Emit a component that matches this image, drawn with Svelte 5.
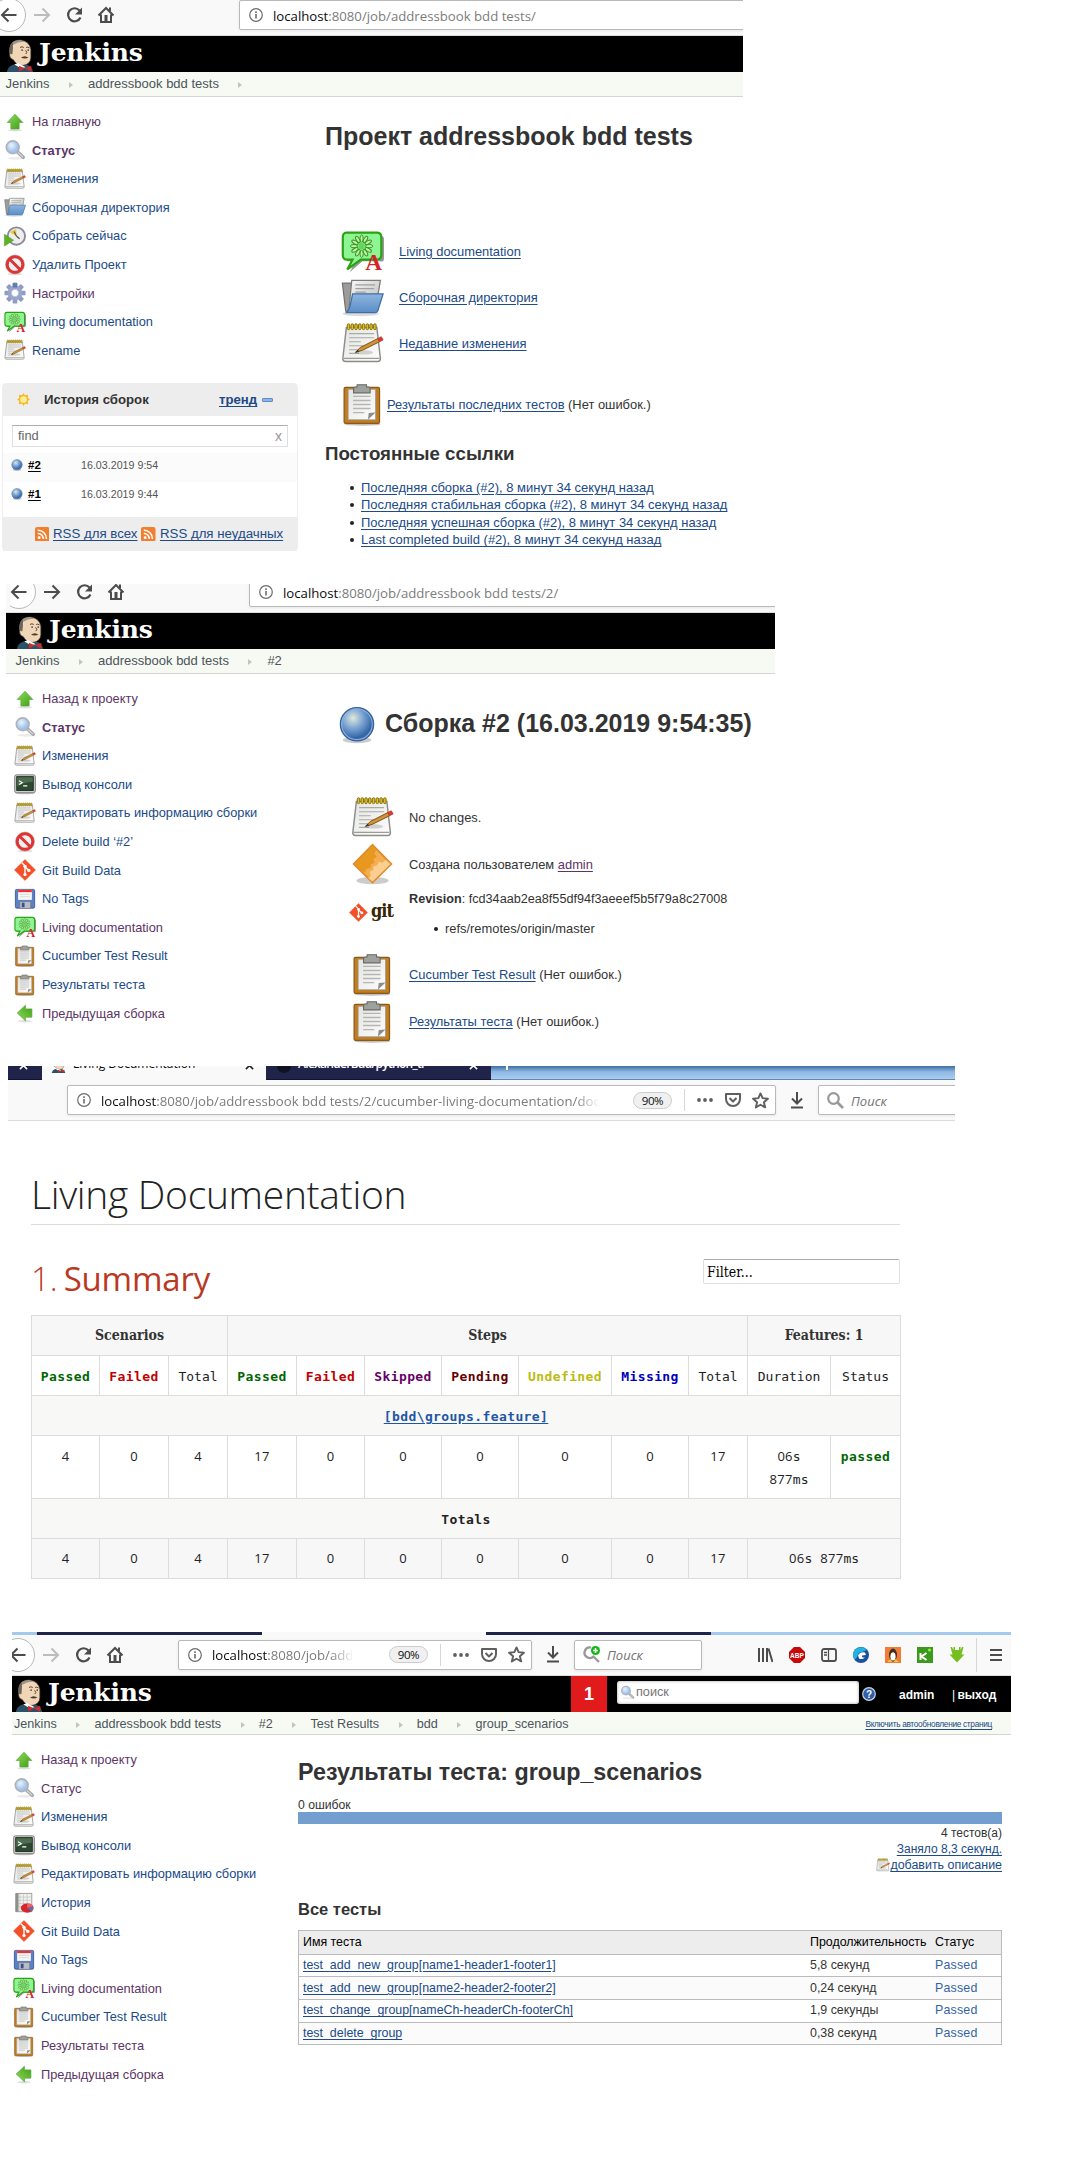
<script>
  const projectMenu = [
    ['up', 'На главную', 'visited'],
    ['search', 'Статус', 'visited current'],
    ['notepad', 'Изменения', ''],
    ['folder', 'Сборочная директория', ''],
    ['clock', 'Собрать сейчас', ''],
    ['stop', 'Удалить Проект', ''],
    ['gear', 'Настройки', 'visited'],
    ['living', 'Living documentation', ''],
    ['notepad', 'Rename', '']
  ];
  const buildMenu = [
    ['up', 'Назад к проекту', 'visited'],
    ['search', 'Статус', 'visited current'],
    ['notepad', 'Изменения', ''],
    ['terminal', 'Вывод консоли', ''],
    ['notepad', 'Редактировать информацию сборки', ''],
    ['stop', 'Delete build ‘#2’', ''],
    ['git', 'Git Build Data', ''],
    ['floppy', 'No Tags', ''],
    ['living', 'Living documentation', 'visited'],
    ['clipboard', 'Cucumber Test Result', ''],
    ['clipboard', 'Результаты теста', ''],
    ['left', 'Предыдущая сборка', 'visited']
  ];
  const resultMenu = [
    ['up', 'Назад к проекту', 'visited'],
    ['search', 'Статус', 'visited'],
    ['notepad', 'Изменения', ''],
    ['terminal', 'Вывод консоли', ''],
    ['notepad', 'Редактировать информацию сборки', ''],
    ['report', 'История', ''],
    ['git', 'Git Build Data', ''],
    ['floppy', 'No Tags', ''],
    ['living', 'Living documentation', 'visited'],
    ['clipboard', 'Cucumber Test Result', ''],
    ['clipboard', 'Результаты теста', 'visited'],
    ['left', 'Предыдущая сборка', 'visited']
  ];
  const permalinks = [
    'Последняя сборка (#2), 8 минут 34 секунд назад',
    'Последняя стабильная сборка (#2), 8 минут 34 секунд назад',
    'Последняя успешная сборка (#2), 8 минут 34 секунд назад',
    'Last completed build (#2), 8 минут 34 секунд назад'
  ];
  const builds = [
    ['#2', '16.03.2019 9:54'],
    ['#1', '16.03.2019 9:44']
  ];
  const tests = [
    ['test_add_new_group[name1-header1-footer1]', '5,8 секунд'],
    ['test_add_new_group[name2-header2-footer2]', '0,24 секунд'],
    ['test_change_group[nameCh-headerCh-footerCh]', '1,9 секунды'],
    ['test_delete_group', '0,38 секунд']
  ];
  const counts = [4, 0, 4, 17, 0, 0, 0, 0, 0, 17];
  const teeth = [0, 45, 90, 135, 180, 225, 270, 315];
  const petals = [0, 30, 60, 90, 120, 150, 180, 210, 240, 270, 300, 330];
  const rings = [7, 11.2, 15.4, 19.6, 23.8, 28, 32.2, 36.4];
</script>

{#snippet icon(name, cls)}
  <svg class="{cls} glyph" viewBox="0 0 48 48">
    {#if name === 'up' || name === 'left'}
      <g transform={name === 'left' ? 'rotate(-90 24 24)' : ''}>
        <path d="M24 7 L41 25 H33 V39 H15 V25 H7 Z" fill="url(#gGreen)" stroke="#55a83a" stroke-width="1.5" />
      </g>
      <ellipse cx="24" cy="42" rx="15" ry="2.5" fill="#000" opacity=".13" />
    {:else if name === 'search'}
      <ellipse cx="26" cy="42" rx="18" ry="3" fill="#000" opacity=".08" />
      <path d="M28 27 L42 40" stroke="#a2a4a8" stroke-width="7.5" stroke-linecap="round" />
      <path d="M31 30 L41 39" stroke="#d9dadd" stroke-width="2.5" stroke-linecap="round" />
      <circle cx="19" cy="18" r="14" fill="url(#gLens)" stroke="#adb2b9" stroke-width="3.5" />
    {:else if name === 'notepad'}
      <path d="M6 6 H40 L44 41 Q44 44 41 44 H5 Q2 44 2 41 Z" fill="url(#gPaper)" stroke="#8b8d88" stroke-width="1.6" />
      <path d="M3 40.5 H43" stroke="#9a9c97" stroke-width="1.4" />
      {#each rings as x}
        <rect x={x} y="2" width="2.8" height="6.5" rx="1.3" fill="#e0bf24" stroke="#86700c" stroke-width="1.1" />
      {/each}
      <path d="M9 13 H37 M9 17.5 H37 M9 22 H22 M9 26.5 H30 M9 31 H24 M9 35 H20" stroke="#a9aba6" stroke-width="1.2" />
      <ellipse cx="26" cy="34" rx="10" ry="2.4" fill="#000" opacity=".15" />
      <path d="M16 34 L21.500 28.500 L41 18.500 L43 22 L24 31.500 Z" fill="#d1933a" stroke="#7d5310" stroke-width="1.1" />
      <path d="M41 18.500 L45 16.500 L47 20 L43 22 Z" fill="#e8352b" stroke="#b5413b" />
      <path d="M16 34 L18.500 31 L20.500 33 Z" fill="#333" />
    {:else if name === 'folder'}
      <ellipse cx="22" cy="42" rx="20" ry="3" fill="#000" opacity=".14" />
      <path d="M1.500 8 H14 L12 40 H7 Q5 40 5 37 Z" fill="#9c9d9b" stroke="#6f706e" stroke-width="1.3" />
      <path d="M12 5 H44 L39 34 L9 36 Z" fill="url(#gGray)" stroke="#7c7d7a" stroke-width="1.4" />
      <path d="M16 10 H38 M16 14 H37 M16 18 H28" stroke="#a0a19e" stroke-width="1.4" />
      <path d="M13 20 H47 L41 39 Q40 41 38 41 H6 Q9 38 10 34 Z" fill="url(#gBlue)" stroke="#3c6ea8" stroke-width="1.4" />
    {:else if name === 'clock'}
      <circle cx="27" cy="24" r="19" fill="#ededeb" stroke="#8888a0" stroke-width="4" />
      <path d="M27 24 V9 A15 15 0 0 0 14 17 Z" fill="#ecc845" />
      <path d="M27 24 L34 30 M27 24 L22 14" stroke="#555" stroke-width="2.6" />
      <path d="M1 20 L21 33 L1 46 Z" fill="#5fb320" stroke="#46901a" />
    {:else if name === 'stop'}
      <ellipse cx="24" cy="44" rx="16" ry="2.5" fill="#000" opacity=".12" />
      <circle cx="24" cy="23" r="17" fill="#f1efef" stroke="#dc3535" stroke-width="6.5" />
      <path d="M12 11 L36 35" stroke="#dc3535" stroke-width="6.5" />
      <circle cx="24" cy="23" r="20.5" fill="none" stroke="#b92424" />
    {:else if name === 'gear'}
      {#each teeth as a}
        <rect x="19" y="1" width="10" height="14" rx="2" fill="#8e9bc4" transform="rotate({a} 24 24)" />
      {/each}
      <circle cx="24" cy="24" r="12" fill="#fff" stroke="#9aa5cb" stroke-width="8" />
      <circle cx="24" cy="24" r="8" fill="#fff" stroke="#7583b0" />
      <path d="M19 3 H29 V12 H19 Z" fill="#5d7cae" />
    {:else if name === 'living'}
      <path d="M8 6 H43 Q48 6 48 10 V32 Q48 36 43 35 H24 L10 47 L16 35 H7 Z" fill="#000" opacity=".4" />
      <path d="M6 3 H40 Q45 3 45 8 V28 Q45 33 40 33 H22 L7 44 L13 33 H6 Q2 33 2 28 V8 Q2 3 6 3 Z" fill="#8df592" stroke="#2ba114" stroke-width="2.4" />
      {#each petals as a}
        <ellipse cx="23" cy="9.5" rx="1.8" ry="4" fill="#b9f6a0" stroke="#3c9127" stroke-width="1.1" transform="rotate({a} 23 18)" />
      {/each}
      <circle cx="23" cy="18" r="3.5" fill="#62d75e" />
      <text x="27" y="45" class="red-a">A</text>
    {:else if name === 'terminal'}
      <ellipse cx="24" cy="44" rx="21" ry="2.5" fill="#000" opacity=".25" />
      <rect x="1.5" y="4" width="45" height="39" rx="4" fill="#cfd0cc" stroke="#777975" stroke-width="2" />
      <rect x="6" y="8" width="36" height="30" fill="#2d4a31" stroke="#1c271d" stroke-width="2" />
      <path d="M7 9 H41 V19 Q22 20 7 29 Z" fill="#6c8a6c" opacity=".55" />
      <path d="M11 17 L18 21 L11 25 M20 28 H29" stroke="#fff" stroke-width="2.4" fill="none" />
    {:else if name === 'git'}
      <path d="M24 1 L47 24 L24 47 L1 24 Z" fill="#f34f29" stroke="#f34f29" stroke-linejoin="round" />
      <path d="M17 8 L24 15 V35 M24 17 L32 25" stroke="#fff" stroke-width="3" fill="none" />
      <circle cx="24" cy="16" r="3.6" fill="#fff" /><circle cx="24" cy="34" r="3.6" fill="#fff" /><circle cx="32.5" cy="25" r="3.6" fill="#fff" />
    {:else if name === 'floppy'}
      <rect x="3" y="3" width="42" height="41" rx="3" fill="#5b80c4" stroke="#35528c" stroke-width="1.8" />
      <rect x="9" y="4" width="30" height="22" fill="#f6f6f6" />
      <rect x="9" y="4" width="30" height="5" fill="#ee3030" />
      <path d="M13 14 H35 M13 19 H35" stroke="#ccc" stroke-width="1.4" />
      <rect x="13" y="30" width="23" height="14" fill="#b9bcc2" stroke="#777" />
      <rect x="17" y="32" width="6" height="10" fill="#35528c" />
    {:else if name === 'clipboard'}
      <ellipse cx="24" cy="46" rx="20" ry="1.8" fill="#000" opacity=".25" />
      <rect x="3.5" y="5" width="39.5" height="40" rx="1.5" fill="#c17d22" stroke="#8d5a14" stroke-width="1.4" />
      <path d="M8 7 H38.5 V41 H8 Z" fill="url(#gPaper)" stroke="#999" stroke-width=".8" />
      <path d="M30 41 L38.5 33 L31 33.5 Z" fill="#8b8d88" />
      <path d="M13.500 15 H33 M13.500 19.500 H33 M13.500 24 H33 M13.500 28.500 H33 M13.500 33 H26" stroke="#b5b6b3" stroke-width="1.5" />
      <path d="M14 6 Q14 4.500 16 4.500 H18 V2 H28.500 V4.500 H30.500 Q32.500 4.500 32.500 6 V11 H14 Z" fill="#9fa19c" stroke="#666864" stroke-width="1.2" />
    {:else if name === 'report'}
      <rect x="7" y="3" width="34" height="40" fill="#f2f2f1" stroke="#9a9b98" stroke-width="2" />
      <path d="M7 11 H41 M7 18 H41 M7 25 H41 M7 32 H41 M15 3 V43 M23 3 V43 M31 3 V43" stroke="#bbbdb9" stroke-width="1.4" />
      <path d="M5 3 H12 V43 H5 Z" fill="#8d8f8b" />
      <ellipse cx="31" cy="35" rx="14" ry="10" fill="#d4262c" />
      <path d="M31 35 L44 32 Q45 38 40 42 Z" fill="#4a76c0" />
      <path d="M31 35 L31 25 Q41 25 44 31 Z" fill="#ee6168" />
    {:else if name === 'ball'}
      <ellipse cx="24" cy="43" rx="18" ry="4" fill="#000" opacity=".2" />
      <circle cx="24" cy="23" r="21" fill="url(#gBall)" stroke="#33619e" stroke-width="1.6" />
      <circle cx="24" cy="23" r="19.300" fill="none" stroke="#8fb2de" stroke-width="1.300" />
    {:else if name === 'user'}
      <ellipse cx="24" cy="42" rx="18" ry="4" fill="#000" opacity=".2" />
      <path d="M24 2 L45 23.500 L24 44 L3 23.500 Z" fill="#f3ae52" stroke="#e08b28" stroke-width="2" />
      <path d="M24 3 L28 8 L26 12 L29 15 L25 18 L26 22 L22 24 L22 28 L17 29 L16 33 L11 31 L4 23.500 Z" fill="#e8971f" />
      <path d="M24 43 L44 23.500 L39 19 L35 22 L31 21 L29 25 L25 26 L25 30 L21 32 L22 37 L19 39 Z" fill="#fbcf91" />
    {/if}
  </svg>
{/snippet}

{#snippet nav(forward)}
  <svg class="nav" viewBox="0 0 124 36" width="124" height="36">
    <circle cx="9" cy="18" r="16.500" fill="#fff" stroke="#b8b8b8" />
    <path d="M2 18 H16.500 M8.500 11.500 L2 18 L8.500 24.500" fill="none" stroke="#4c4c4c" stroke-width="2" />
    <path d="M34 18 H49 M42.500 11.500 L49 18 L42.500 24.500" fill="none" stroke={forward ? '#4c4c4c' : '#bcbcbc'} stroke-width="2" />
    <path d="M79.500 13.500 A6.500 6.500 0 1 0 80.500 20.500" fill="none" stroke="#4c4c4c" stroke-width="2.200" />
    <path d="M82 10.500 V17.500 H75 Z" fill="#4c4c4c" />
    <path d="M98.500 18.500 L106 11 L113.500 18.500 M101 17.500 V25 H111 V17.500" fill="none" stroke="#4c4c4c" stroke-width="2" />
    <rect x="104.500" y="18" width="3" height="6" fill="#4c4c4c" />
    <path d="M110 10.500 V14" stroke="#4c4c4c" stroke-width="2" />
  </svg>
{/snippet}

{#snippet info()}
  <svg class="info" viewBox="0 0 14 14"><circle cx="7" cy="7" r="6.300" fill="none" stroke="#6d6d6d" stroke-width="1.200" /><path d="M7 6 V10.500 M7 3.300 V4.900" stroke="#6d6d6d" stroke-width="1.600" /></svg>
{/snippet}

{#snippet pageActions()}
  <span class="zoom">90%</span>
  <i class="sep"></i>
  <svg class="dots" viewBox="0 0 16 4"><circle cx="2" cy="2" r="1.900" /><circle cx="8" cy="2" r="1.900" /><circle cx="14" cy="2" r="1.900" /></svg>
  <svg class="pocket" viewBox="0 0 16 16"><path d="M1 2 H15 V7 A7 7 0 0 1 1 7 Z M4.500 6 L8 9.500 L11.500 6" fill="none" stroke="#5f5f5f" stroke-width="2" stroke-linejoin="round" /></svg>
  <svg class="star" viewBox="0 0 16 16"><path d="M8 1.300 L10 5.800 L15 6.300 L11.200 9.600 L12.400 14.500 L8 12 L3.600 14.500 L4.800 9.600 L1 6.300 L6 5.800 Z" fill="none" stroke="#5f5f5f" stroke-width="1.800" stroke-linejoin="round" /></svg>
{/snippet}

{#snippet download()}
  <svg class="download" viewBox="0 0 14 17"><path d="M7 0 V11 M2 6.500 L7 11.500 L12 6.500 M1 15.500 H13" fill="none" stroke="#4c4c4c" stroke-width="2" /></svg>
{/snippet}

{#snippet butler()}
  <path d="M0 35 Q1 29 7 27 L21 27 Q27 29 28 35 Z" fill="#2c5068" />
  <path d="M3 11 Q4 1 14 1 Q24 2 25.500 11 L25.500 20 Q25 27 17 28 Q10 28 7 22 Q3 21 3 17 Z" fill="#f0d6b7" stroke="#4a3a2a" stroke-width=".7" />
  <path d="M2.500 14 Q2 5 8 2.500 Q6 6 6.500 10 L6 16 Q4 17 2.500 14 Z" fill="#6d665d" />
  <path d="M6 3.500 Q13 -.5 20 3 Q13 2 7 6 Z" fill="#9c948a" />
  <path d="M14 9 Q16 7.500 18 9 M20.500 9 Q22 8 24 9.500 M20 12 Q22.500 15 20 16" stroke="#3b2c1e" stroke-width=".9" fill="none" />
  <path d="M15.500 11.800 h1.500 M22 11.800 h1.500" stroke="#222" stroke-width="1.300" />
  <path d="M15 20 Q19 16.500 23 20 Q19 21.500 15 20" fill="#4d3c2b" />
  <path d="M8 27 L12 25.500 L20 30 L15 31 Z" fill="#fff" />
  <path d="M13 28.500 L19 31 L13 34.800 Z M26 28.500 L19 31 L26 34.800 Z" fill="#d62a2a" />
{/snippet}

{#snippet brand()}
  <svg class="butler" viewBox="0 0 28 35">{@render butler()}</svg>
  <span class="wordmark">Jenkins</span>
{/snippet}

{#snippet crumbs(items, trailing)}
  {#each items as item, i}
    <span>{item}</span>{#if i < items.length - 1 || trailing}<i class="caret"></i>{/if}
  {/each}
{/snippet}

{#snippet menu(items)}
  <ul class="menu">
    {#each items as [glyph, label, cls]}
      <li class={cls}>{@render icon(glyph, 'small')}<span>{label}</span></li>
    {/each}
  </ul>
{/snippet}

{#snippet rss()}
  <svg class="rss" viewBox="0 0 14 14"><rect width="14" height="14" rx="2" fill="#f08030" /><circle cx="4" cy="10.300" r="1.400" fill="#fff" /><path d="M2.700 6.200 A5 5 0 0 1 7.900 11.500 M2.700 3.200 A8 8 0 0 1 11 11.500" fill="none" stroke="#fff" stroke-width="1.500" /></svg>
{/snippet}

<svg class="defs" width="0" height="0">
  <defs>
    <linearGradient id="gGreen" x1="0" y1="0" x2="1" y2="1"><stop offset="0" stop-color="#8fdc5c" /><stop offset="1" stop-color="#3f9d12" /></linearGradient>
    <radialGradient id="gLens" cx=".4" cy=".35"><stop offset="0" stop-color="#e9f3fd" /><stop offset="1" stop-color="#9fc3ea" /></radialGradient>
    <linearGradient id="gPaper" x1="0" y1="0" x2="1" y2="1"><stop offset="0" stop-color="#e4e4e2" /><stop offset="1" stop-color="#fdfdfd" /></linearGradient>
    <linearGradient id="gGray" x1="0" y1="0" x2="1" y2="1"><stop offset="0" stop-color="#fafafa" /><stop offset="1" stop-color="#b7b8b6" /></linearGradient>
    <linearGradient id="gBlue" x1="0" y1="0" x2="0" y2="1"><stop offset="0" stop-color="#8fb5df" /><stop offset="1" stop-color="#5a8dc6" /></linearGradient>
    <radialGradient id="gBall" cx=".38" cy=".32" r=".75"><stop offset="0" stop-color="#dfe9dc" /><stop offset=".4" stop-color="#7ea6d4" /><stop offset=".8" stop-color="#3365a4" /><stop offset="1" stop-color="#4a7ab8" /></radialGradient>
  </defs>
</svg>

<section class="shot project">
  <div class="toolbar">
    {@render nav(false)}
    <div class="url open">{@render info()}<span class="addr"><b>localhost</b>:8080/job/addressbook bdd tests/</span></div>
  </div>
  <header>{@render brand()}</header>
  <nav class="crumbs">{@render crumbs(['Jenkins', 'addressbook bdd tests'], true)}</nav>
  <div class="body">
    <aside>
      {@render menu(projectMenu)}
      <div class="history">
        <div class="history-head">
          <svg class="sun" viewBox="0 0 14 14"><path d="M7 0 L8.500 2.500 L12 2 L11.500 5.500 L14 7 L11.500 8.500 L12 12 L8.500 11.500 L7 14 L5.500 11.500 L2 12 L2.500 8.500 L0 7 L2.500 5.500 L2 2 L5.500 2.500 Z" fill="#fbb52c" /><circle cx="7" cy="7" r="3.600" fill="#fdf08d" /></svg>
          <strong>История сборок</strong>
          <a class="trend">тренд</a><i class="minus"></i>
        </div>
        <div class="find"><span>find</span><em>x</em></div>
        {#each builds as [num, date]}
          <div class="build">{@render icon('ball', 'tiny')}<a>{num}</a><time>{date}</time></div>
        {/each}
        <div class="history-foot">{@render rss()}<a>RSS для всех</a>{@render rss()}<a>RSS для неудачных</a></div>
      </div>
    </aside>
    <main>
      <h1>Проект addressbook bdd tests</h1>
      <div class="rows">
        <div class="row">{@render icon('living', 'large')}<a>Living documentation</a></div>
        <div class="row">{@render icon('folder', 'large')}<a>Сборочная директория</a></div>
        <div class="row">{@render icon('notepad', 'large')}<a>Недавние изменения</a></div>
      </div>
      <div class="row latest">{@render icon('clipboard', 'large')}<p><a>Результаты последних тестов</a> (Нет ошибок.)</p></div>
      <h2>Постоянные ссылки</h2>
      <ul class="links">
        {#each permalinks as link}<li><a>{link}</a></li>{/each}
      </ul>
    </main>
  </div>
</section>

<section class="shot build-page">
  <div class="toolbar">
    {@render nav(true)}
    <div class="url open">{@render info()}<span class="addr"><b>localhost</b>:8080/job/addressbook bdd tests/2/</span></div>
  </div>
  <header>{@render brand()}</header>
  <nav class="crumbs">{@render crumbs(['Jenkins', 'addressbook bdd tests', '#2'], false)}</nav>
  <div class="body">
    <aside>{@render menu(buildMenu)}</aside>
    <main>
      <div class="title">{@render icon('ball', 'status')}<h1>Сборка #2 (16.03.2019 9:54:35)</h1></div>
      <div class="row">{@render icon('notepad', 'large')}<p>No changes.</p></div>
      <div class="row">{@render icon('user', 'large')}<p>Создана пользователем <a class="seen">admin</a></p></div>
      <div class="row revision">
        <div class="git-logo">{@render icon('git', 'git-mark')}<span>git</span></div>
        <div>
          <p><b>Revision</b>: fcd34aab2ea8f55df94f3aeeef5b5f79a8c27008</p>
          <ul><li>refs/remotes/origin/master</li></ul>
        </div>
      </div>
      <div class="row">{@render icon('clipboard', 'large')}<p><a>Cucumber Test Result</a> (Нет ошибок.)</p></div>
      <div class="row">{@render icon('clipboard', 'large')}<p><a>Результаты теста</a> (Нет ошибок.)</p></div>
    </main>
  </div>
</section>

<section class="shot docs">
  <div class="tabs">
    <div class="tab dark first"><svg class="close" viewBox="0 0 10 10"><path d="M1 1 L9 9 M9 1 L1 9" stroke="#fff" stroke-width="1.800" /></svg></div>
    <div class="tab active"><svg class="favicon" viewBox="0 0 28 35">{@render butler()}</svg><span>Living Documentation</span><svg class="close" viewBox="0 0 10 10"><path d="M1 1 L9 9 M9 1 L1 9" stroke="#222" stroke-width="1.800" /></svg></div>
    <div class="tab dark repo"><i class="octo"></i><span>AlexanderBud/python_tr</span><svg class="close" viewBox="0 0 10 10"><path d="M1 1 L9 9 M9 1 L1 9" stroke="#fff" stroke-width="1.800" /></svg></div>
    <div class="glass"><i></i></div>
  </div>
  <div class="toolbar">
    <div class="url">
      {@render info()}<span class="addr fade"><b>localhost</b>:8080/job/addressbook bdd tests/2/cucumber-living-documentation/doc</span>
      {@render pageActions()}
    </div>
    {@render download()}
    <div class="search open"><svg class="mag" viewBox="0 0 17 17"><circle cx="6.500" cy="6.500" r="5.300" fill="none" stroke="#999" stroke-width="2.200" /><path d="M10.500 10.500 L16 16" stroke="#999" stroke-width="2.600" /></svg><em>Поиск</em></div>
  </div>
  <article>
    <h1>Living Documentation</h1>
    <div class="summary-head"><h2><span>1.</span> Summary</h2><div class="filter">Filter...</div></div>
    <table>
      <colgroup><col class="c68" /><col class="c69" /><col class="c59" /><col class="c69" /><col class="c68" /><col class="c77" /><col class="c77" /><col class="c93" /><col class="c77" /><col class="c59" /><col class="c83" /><col class="c70" /></colgroup>
      <tbody>
        <tr class="head"><th colspan="3">Scenarios</th><th colspan="7">Steps</th><th colspan="2">Features: 1</th></tr>
        <tr>
          <td class="b passed">Passed</td><td class="b failed">Failed</td><td>Total</td>
          <td class="b passed">Passed</td><td class="b failed">Failed</td><td class="b skipped">Skipped</td><td class="b pending">Pending</td><td class="b undef">Undefined</td><td class="b missing">Missing</td><td>Total</td>
          <td>Duration</td><td>Status</td>
        </tr>
        <tr class="shade"><td colspan="12" class="b"><a>[bdd\groups.feature]</a></td></tr>
        <tr class="tall">{#each counts as n}<td class="num">{n}</td>{/each}<td><span class="num">06</span>s<br /><span class="num">877</span>ms</td><td class="b passed">passed</td></tr>
        <tr class="shade"><td colspan="12" class="b">Totals</td></tr>
        <tr class="foot">{#each counts as n}<td class="num">{n}</td>{/each}<td colspan="2"><span class="num">06</span>s <span class="num">877</span>ms</td></tr>
      </tbody>
    </table>
  </article>
</section>

<section class="shot results">
  <div class="strip"><i class="sky"></i><i class="navy"></i><i class="pale"></i><i class="navy"></i><i class="sky rest"></i></div>
  <div class="toolbar">
    {@render nav(false)}
    <div class="url">
      {@render info()}<span class="addr fade"><b>localhost</b>:8080/job/add</span>
      {@render pageActions()}
    </div>
    {@render download()}
    <div class="search"><svg class="mag" viewBox="0 0 17 17"><path d="M8 1.500 A5.300 5.300 0 1 0 11 10 M10 10 L16 16" fill="none" stroke="#999" stroke-width="2.300" /><circle cx="12.500" cy="4.500" r="4.500" fill="#12b812" /><path d="M12.500 2 V7 M10 4.500 H15" stroke="#fff" stroke-width="1.500" /></svg><em>Поиск</em></div>
    <div class="addons">
      <svg viewBox="0 0 16 16"><path d="M2 1 V15 M6 1 V15 M10 1 V15 M11.500 1.500 L15.500 15" stroke="#4c4c4c" stroke-width="2" /></svg>
      <svg viewBox="0 0 16 16"><path d="M5 0 H11 L16 5 V11 L11 16 H5 L0 11 V5 Z" fill="#c8070a" /><text x="1" y="10.800" class="abp">ABP</text></svg>
      <svg viewBox="0 0 16 16"><rect x="1" y="2" width="14" height="12" rx="2" fill="none" stroke="#4c4c4c" stroke-width="1.800" /><path d="M7.500 2 V14 M3 5.500 H6 M3 8 H6" stroke="#4c4c4c" stroke-width="1.300" /></svg>
      <svg viewBox="0 0 16 16"><circle cx="8" cy="8" r="8" fill="#1c4f9c" /><path d="M0 8 A8 8 0 0 1 14 3 L9 5 A4.500 4.500 0 0 0 4.500 9 Q4 11 1.500 12.500 Z" fill="#21b4e0" /><path d="M5 8.500 Q7 4.500 12 5.500 L13 8 L9 8.500 Q8.500 11 12 10.500 Q9 13 6 11.500 Z" fill="#fff" /></svg>
      <svg viewBox="0 0 16 16"><rect width="16" height="16" fill="#f47b35" /><ellipse cx="8" cy="8" rx="4" ry="6.500" fill="#3a332c" /><ellipse cx="8" cy="9.500" rx="2.600" ry="4" fill="#fff" /><path d="M3 14 L6 12 L7 15 H3 Z M13 14 L10 12 L9 15 H13 Z M7 5 H9 L8 6.500 Z" fill="#f5c33a" /></svg>
      <svg viewBox="0 0 16 16"><rect width="16" height="16" fill="#3d991d" /><path d="M3.500 6 V13 M9.500 6 L4.500 9.500 L9.500 13" stroke="#fff" stroke-width="2" fill="none" /><circle cx="12.500" cy="3" r="1.600" fill="#8df03c" /></svg>
      <svg viewBox="0 0 16 16"><path d="M1.500 0 L3 0 L4.500 3 V0 H6 V3 H10 V0 H11.500 V3 L13 0 H14.500 L12.500 7.500 H15.500 L8 15.500 L.5 7.500 H3.500 Z" fill="#74bf1d" /></svg>
    </div>
    <i class="sep long"></i>
    <svg class="burger" viewBox="0 0 12 12"><path d="M0 1 H12 M0 6 H12 M0 11 H12" stroke="#4c4c4c" stroke-width="1.800" /></svg>
  </div>
  <header>
    {@render brand()}
    <span class="alert">1</span>
    <div class="find-box">{@render icon('search', 'lens')}<span>поиск</span></div>
    <svg class="help" viewBox="0 0 14 14"><circle cx="7" cy="7" r="6.300" fill="#2f5da8" stroke="#c9d6ea" stroke-width="1.200" /><text x="4" y="10.500">?</text></svg>
    <b class="who">admin</b><b class="out"><i>|</i> выход</b>
  </header>
  <nav class="crumbs">{@render crumbs(['Jenkins', 'addressbook bdd tests', '#2', 'Test Results', 'bdd', 'group_scenarios'], false)}<a class="refresh">Включить автообновление страниц</a></nav>
  <div class="body">
    <aside>{@render menu(resultMenu)}</aside>
    <main>
      <h1>Результаты теста: group_scenarios</h1>
      <p class="fails">0 ошибок</p>
      <div class="bar"></div>
      <div class="meta"><p>4 тестов(а)</p><p><a>Заняло 8,3 секунд.</a></p><p class="describe">{@render icon('notepad', 'edit')}<a>добавить описание</a></p></div>
      <h2>Все тесты</h2>
      <div class="grid">
        <div class="line top"><span>Имя теста</span><span>Продолжительность</span><span>Статус</span></div>
        {#each tests as [name, time]}
          <div class="line"><span><a>{name}</a></span><span>{time}</span><span class="ok">Passed</span></div>
        {/each}
      </div>
    </main>
  </div>
</section>

<style>
  :global(body) { background: #fff; }
  * { box-sizing: border-box; }
  .defs { position: absolute; }
  .shot { font-family: "Liberation Sans", Arial, sans-serif; font-size: 12.900px; color: #333; overflow: hidden; white-space: nowrap; }
  .project { width: 743px; height: 584px; }
  .build-page { width: 769px; height: 482px; margin-left: 6px; }
  .docs { width: 947px; height: 566px; margin-left: 8px; }
  .results { width: 999px; height: 532px; margin-left: 12px; }
  a { color: #204a87; text-decoration: underline; text-underline-offset: 2px; }
  p, h1, h2, ul { margin: 0; padding: 0; }
  ul { list-style: none; }
  svg { display: block; flex: none; }
  .glyph { overflow: visible; }

  /* browser chrome */
  .toolbar { display: flex; align-items: center; background: #f9f9f9; border-bottom: 1px solid #dcdcdc; overflow: hidden; font-family: "Open Sans", "Noto Sans", sans-serif; }
  .project .toolbar { height: 36px; padding-bottom: 5px; }
  .build-page .toolbar { height: 29px; padding-bottom: 12px; }
  .docs .toolbar { height: 41px; }
  .results .toolbar { height: 41px; padding-bottom: 1px; }
  .build-page .nav { margin-left: 4px; }
  .results .nav { margin-left: -3px; }
  .url, .search { display: flex; align-items: center; flex: none; height: 30px; background: #fff; border: 1px solid #b9b9b9; border-radius: 2px; box-shadow: 0 1px 3px rgba(0, 0, 0, .08); }
  .project .url, .build-page .url { margin-left: 115px; width: 600px; }
  .docs .url { margin-left: 59px; width: 709px; }
  .results .url { margin-left: 45px; width: 354px; }
  .info { width: 14px; height: 14px; margin-left: 9px; }
  .addr { margin-left: 10px; padding-top: 1px; font-size: 13.200px; color: #7c7c7c; }
  .addr b { font-weight: 400; color: #0c0c0d; }
  .fade { overflow: hidden; -webkit-mask-image: linear-gradient(to right, #000 calc(100% - 24px), transparent); mask-image: linear-gradient(to right, #000 calc(100% - 24px), transparent); }
  .docs .fade { width: 499px; margin-right: 33px; }
  .results .fade { width: 142px; margin-right: 35px; }
  .zoom { width: 39px; height: 17px; line-height: 15px; border: 1px solid #ccc; border-radius: 9px; background: #f0f0f0; color: #0c0c0d; font-size: 11.500px; text-align: center; letter-spacing: -.4px; }
  .sep { flex: none; width: 1px; height: 22px; background: #d7d7db; margin-left: 12px; }
  .dots { width: 16px; height: 4px; margin-left: 12px; fill: #5f5f5f; }
  .pocket { width: 16px; height: 16px; margin-left: 12px; }
  .star { width: 17px; height: 17px; margin-left: 11px; }
  .download { width: 14px; height: 17px; margin-left: 14px; }
  .search { width: 260px; margin-left: 14px; }
  .results .search { width: 128px; }
  .mag { width: 17px; height: 17px; margin-left: 8px; }
  .search em { margin-left: 7px; padding-top: 1px; font-size: 13px; color: #737373; }
  .addons { display: flex; gap: 16px; margin-left: 55px; }
  .addons svg { width: 16px; height: 16px; }
  .abp { font: bold 6.500px "Liberation Sans", sans-serif; fill: #fff; }
  .long { height: 34px; margin-left: 11px; }
  .burger { width: 12px; height: 12px; margin-left: 13px; }

  /* Jenkins page header */
  header { display: flex; height: 36px; background: #000; color: #fff; align-items: center; }
  .butler { width: 28px; height: 33px; margin: 3px 0 0 6px; }
  .wordmark { margin: -2px 0 0 5px; font: bold 25px/30px "DejaVu Serif", Georgia, serif; letter-spacing: -.2px; width: 105px; }
  .build-page .butler { margin-left: 10px; }
  .results .butler { margin-left: 3px; }
  .crumbs { display: flex; align-items: center; height: 25px; padding: 0 0 1px 5.500px; background: #f6faf2; border-bottom: 1px solid #d3d7cf; color: #4d545d; font-size: 13px; }
  .build-page .crumbs { padding-left: 9.500px; }
  .results .crumbs { height: 23px; padding: 1px 0 0 2px; font-size: 12.600px; }
  .caret { width: 0; height: 0; margin: 2px 15px 0 19.500px; border-left: 4px solid #c2c4c0; border-top: 3.500px solid transparent; border-bottom: 3.500px solid transparent; }
  .results .caret { margin-left: 19.500px; margin-right: 14.200px; }
  .body { display: flex; }
  aside { flex: none; width: 325px; padding-top: 10.300px; }
  .build-page aside { width: 334px; }
  .results aside { width: 286px; }
  .menu { padding-left: 4px; font-size: 12.800px; }
  .build-page .menu { padding-left: 8px; }
  .results .menu { padding-left: 1px; }
  .menu li { display: flex; align-items: center; height: 28.600px; color: #204a87; }
  .menu span { margin-left: 6px; }
  .menu .visited { color: #5c3566; }
  .menu .current { font-weight: bold; }
  .small { width: 22px; height: 22px; }
  .red-a { font: bold 26px "Liberation Serif", serif; fill: #d5232a; }

  h1 { font-size: 25px; letter-spacing: 0; }
  .project h1 { height: 78px; line-height: 78px; }
  .rows { margin-top: 53px; }
  .row { display: flex; align-items: center; height: 46.300px; padding-left: 16px; }
  .large { width: 43px; height: 43px; margin-right: 15px; }
  .latest { margin-top: 14.600px; height: 46px; }
  .latest .large { margin-right: 3px; }
  .project h2 { margin-top: 11.500px; height: 30px; line-height: 30px; font-size: 18.700px; }
  .links { margin-top: 10px; padding-left: 36px; font-size: 12.970px; }
  .links li { height: 17.500px; line-height: 17.500px; }
  .links li::before, .revision li::before { content: ""; display: inline-block; width: 4px; height: 4px; margin: 0 7px 2px -11px; border-radius: 50%; background: #222; }

  .history { width: 296px; height: 168px; margin: 18.300px 0 0 2px; border: 1px solid #eee; border-radius: 4px; }
  .history-head { display: flex; align-items: center; height: 32px; padding-left: 14px; background: #ededed; font-size: 13.200px; }
  .sun { width: 13px; height: 13px; }
  .history-head strong { margin-left: 14px; width: 175px; }
  .trend { font-weight: bold; }
  .minus { width: 11px; height: 4px; margin-left: 5px; border: 1px solid #5d8ecb; border-radius: 1px; background: #8fb5e4; }
  .find { display: flex; justify-content: space-between; height: 22px; line-height: 19px; margin: 9px 9px 6px; padding: 0 5px; border: 1px solid #dcdfe6; border-top-color: #abadb3; color: #666; }
  .find em { font-style: normal; font-size: 14px; color: #999; padding-top: 1px; }
  .build { display: flex; align-items: center; height: 29px; padding: 0 0 5px 8px; font-size: 10.700px; color: #555; }
  .build:nth-child(odd) { background: #fbfbfb; }
  .tiny { width: 12px; height: 12px; }
  .build a { width: 53px; margin-left: 5px; font-size: 11.500px; font-weight: bold; color: #000; }
  .history-foot { display: flex; align-items: center; height: 34px; margin-top: 6px; padding-left: 31.500px; background: #ededed; font-size: 13.250px; }
  .history-foot a { margin: 0 4px; }
  .rss { width: 14.500px; height: 14.500px; }

  .title { display: flex; align-items: center; height: 99px; margin-bottom: 21px; }
  .status { width: 38px; height: 38px; margin: 3px 9px 0 -2px; }
  .build-page .row { height: 47px; padding-left: 11px; }
  .build-page .row.revision { height: 63px; padding-left: 9px; }
  .git-logo { display: flex; align-items: center; width: 60px; margin-bottom: 15px; color: #362701; font: bold 18px "DejaVu Serif Condensed", "DejaVu Serif", serif; letter-spacing: -1px; }
  .git-mark { width: 19px; height: 19px; margin-right: 3px; }
  .git-logo span { margin-top: -4px; }
  .revision p { height: 30px; line-height: 23px; font-size: 12.650px; }
  .revision li { padding-left: 36px; height: 33px; line-height: 22px; }
  .seen { color: #5c3566; }

  /* living documentation */
  .tabs { display: flex; height: 14px; overflow: hidden; font: 12px/14px "Open Sans", sans-serif; }
  .tab { display: flex; align-items: flex-start; height: 14px; background: #f9f9f9; }
  .tab span { margin-top: -9px; height: 16px; }
  .close { width: 9px; height: 9px; margin-top: -5px; }
  .dark { background: #20234a; color: #fff; border-bottom: 1px solid #11142e; }
  .first { width: 34px; padding-left: 11px; }
  .active { width: 224px; padding-left: 9px; color: #0c0c0d; }
  .active span { width: 172px; margin-left: 7px; }
  .favicon { width: 15px; height: 17px; margin-top: -10px; }
  .repo { width: 225px; padding-left: 11px; font-weight: 600; }
  .octo { width: 14px; height: 14px; margin-top: -7px; border-radius: 50%; background: #101223; }
  .repo span { width: 171px; margin-left: 7px; letter-spacing: -.7px; }
  .glass { flex: 1; height: 14px; background: linear-gradient(#3e6ea4, #8fb8e3 45%, #a9cdf3); border-bottom: 1px solid #6785a8; }
  .glass i { display: block; width: 2px; height: 4px; margin-left: 15px; background: #fff; }
  article { width: 869px; margin-left: 23px; color: #222; }
  article h1 { height: 104px; padding-top: 43px; font: 300 39px/60px "Open Sans", sans-serif; letter-spacing: -.3px; border-bottom: 1px solid #ddddd8; }
  .summary-head { display: flex; justify-content: space-between; height: 90px; padding-top: 34px; }
  article h2 { font: 400 33px/44px "Open Sans", sans-serif; color: #ba3925; margin-top: -2px; letter-spacing: -.2px; word-spacing: -2px; }
  article h2 span { font-weight: 300; }
  .filter { width: 197px; height: 25px; padding-left: 3px; font: 14px/24px "DejaVu Serif Condensed", "DejaVu Serif", serif; letter-spacing: 0; border: 1px solid #dcdfe6; border-top-color: #abadb3; border-radius: 2px; color: #000; }
  table { width: 869px; table-layout: fixed; border-collapse: collapse; font: 13px/23px "DejaVu Sans Mono", monospace; text-align: center; white-space: normal; }
  .c59 { width: 59px; } .c68 { width: 68px; } .c69 { width: 69px; } .c70 { width: 70px; } .c77 { width: 77px; } .c83 { width: 83px; } .c93 { width: 93px; }
  th, td { padding: 1px 0 0; height: 40px; border: 1px solid #dcdcdc; }
  th { padding: 0 0 2px; font: bold 14px "DejaVu Serif Condensed", "DejaVu Serif", serif; color: #333; }
  .head, .foot { background: #f7f7f7; }
  .foot td { padding-top: 0; }
  .shade { background: #f8f8f7; }
  .tall td { height: 63px; padding-top: 9px; vertical-align: top; }
  .b { font-weight: bold; letter-spacing: .4px; }
  .num { font-family: "Open Sans", "Noto Sans", sans-serif; letter-spacing: .3px; }
  .passed { color: #060; } .failed { color: #c00000; } .skipped { color: #606; } .pending { color: #600; } .undef { color: #bbbb10; } .missing { color: #0000bb; }
  td a { color: #2156a5; }

  /* test results */
  .strip { display: flex; height: 3px; }
  .sky { width: 25px; background: #a4c9ef; }
  .navy { width: 225px; background: #20234a; }
  .pale { width: 224px; background: #f9f9f9; }
  .rest { flex: 1; }
  .results header { align-items: center; }
  .alert { width: 36px; height: 36px; margin-left: 418px; background: #e11b1b; font: bold 18px/36px "Liberation Sans", sans-serif; text-align: center; }
  .find-box { display: flex; align-items: center; width: 242px; height: 23px; margin: -4px 0 0 10px; padding-left: 3px; border-radius: 3px; background: #fff; box-shadow: inset 0 0 3px #999; color: #757575; font-size: 12.700px; }
  .lens { width: 15px; height: 15px; margin-right: 1px; }
  .help { width: 14px; height: 14px; margin: -1px 0 0 3px; }
  .help text { font: bold 10px "Liberation Sans", sans-serif; fill: #fff; }
  .who { margin: 2px 0 0 23px; width: 53px; font-size: 12px; }
  .out { margin-top: 2px; font-size: 12px; word-spacing: -1px; }
  .out i { font-style: normal; font-weight: 400; }
  .refresh { margin-left: auto; margin-right: 19px; font-size: 8.300px; letter-spacing: -.31px; }
  .results h1 { height: 60px; line-height: 75px; font-size: 23.300px; }
  .fails { height: 17px; line-height: 20px; font-size: 12.200px; }
  .bar { width: 704px; height: 12px; background: #729fcf; }
  .meta { width: 704px; height: 65px; padding-top: 1px; }
  .meta p { display: flex; align-items: center; justify-content: flex-end; height: 16px; font-size: 12px; }
  .meta .describe { font-size: 12.450px; }
  .edit { width: 14px; height: 14px; }
  .results h2 { height: 41px; line-height: 40px; font-size: 16.500px; }
  .grid { width: 704px; font-size: 12.400px; border: 1px solid #bbb; }
  .line { display: grid; grid-template-columns: 507px 125px 1fr; height: 22.700px; align-items: center; padding: 0 0 1px 4px; background: #fbfbfb; border-top: 1px solid #bbb; }
  .line:nth-child(even) { background: #fff; }
  .line.top { background: #ededed; border-top: 0; padding-top: 1px; color: #000; }
  .ok { color: #3465a4; letter-spacing: .2px; }
</style>
